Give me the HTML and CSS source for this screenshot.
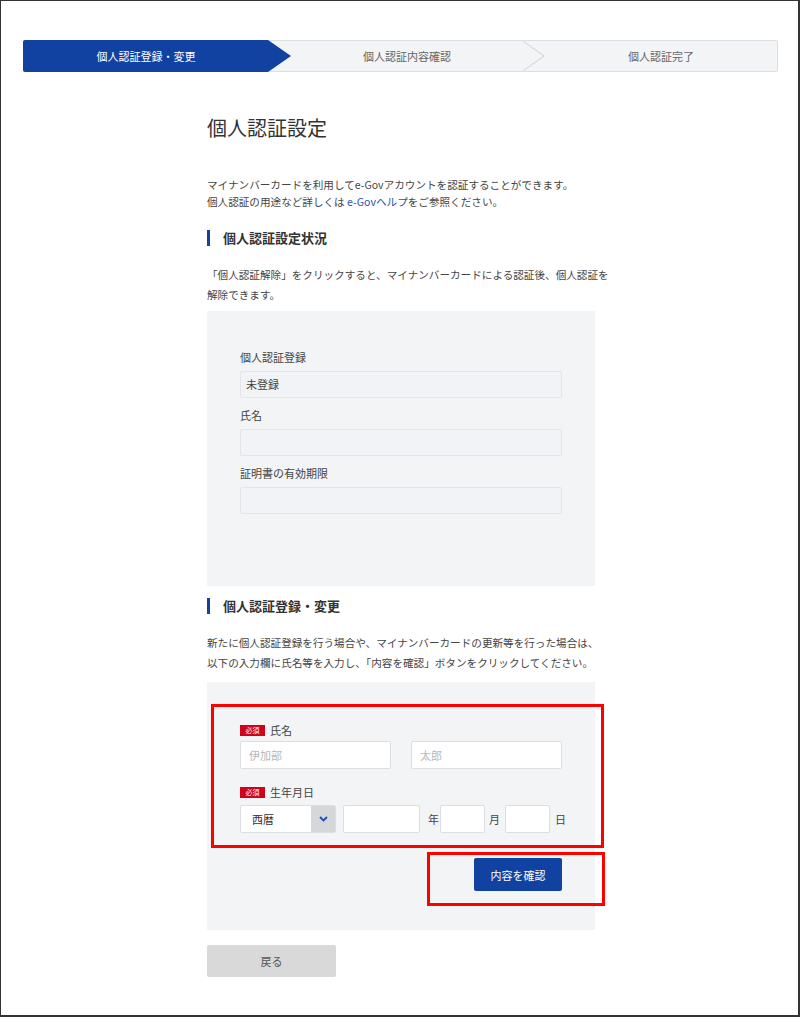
FILE: index.html
```html
<!DOCTYPE html>
<html lang="ja">
<head>
    <meta charset="UTF-8">
    <meta name="viewport" content="width=device-width, initial-scale=1.0">
    <title>個人認証設定</title>
    <link rel="stylesheet" href="styles.css">
</head>

<body>
    <div class="frame">
        <div class="stepper">
            <div class="step active">個人認証登録・変更</div>
            <div class="step">個人認証内容確認</div>
            <svg class="step-sep" width="22" height="30" viewBox="0 0 22 30">
                <polyline points="0,0 21,15 0,30" fill="none" stroke="#cfd1d6" stroke-width="1"/>
            </svg>
            <div class="step">個人認証完了</div>
        </div>

        <div class="main">
            <h1>個人認証設定</h1>
            <p class="lead">マイナンバーカードを利用してe-Govアカウントを認証することができます。<br>個人認証の用途など詳しくは <a href="#">e-Govヘルプ</a>をご参照ください。</p>

            <h2 class="section-title">個人認証設定状況</h2>
            <p class="text">「個人認証解除」をクリックすると、マイナンバーカードによる認証後、個人認証を解除できます。</p>

            <div class="panel status-panel">
                <div class="field-label">個人認証登録</div>
                <div class="field-value">未登録</div>
                <div class="field-label">氏名</div>
                <div class="field-value"></div>
                <div class="field-label">証明書の有効期限</div>
                <div class="field-value"></div>
            </div>

            <h2 class="section-title">個人認証登録・変更</h2>
            <p class="text">新たに個人認証登録を行う場合や、マイナンバーカードの更新等を行った場合は、以下の入力欄に氏名等を入力し、「内容を確認」ボタンをクリックしてください。</p>

            <div class="panel form-panel">
                <div class="input-label"><span class="required">必須</span>氏名</div>
                <div class="name-row">
                    <input type="text" class="text-input" placeholder="伊加部">
                    <input type="text" class="text-input" placeholder="太郎">
                </div>

                <div class="input-label second"><span class="required">必須</span>生年月日</div>
                <div class="date-row">
                    <div class="select">
                        <span class="select-text">西暦</span>
                        <span class="select-arrow">
                            <svg width="9" height="6" viewBox="0 0 9 6"><polyline points="1,1 4.5,4.5 8,1" fill="none" stroke="#1f4fa8" stroke-width="1.8"/></svg>
                        </span>
                    </div>
                    <input type="text" class="text-input year">
                    <span class="unit unit-year">年</span>
                    <input type="text" class="text-input small">
                    <span class="unit unit-month">月</span>
                    <input type="text" class="text-input small">
                    <span class="unit unit-day">日</span>
                </div>

                <div class="actions">
                    <button type="button" class="primary-button">内容を確認</button>
                </div>

                <div class="mark mark-inputs"></div>
                <div class="mark mark-button"></div>
            </div>

            <button type="button" class="back-button">戻る</button>
        </div>
    </div>
</body>
</html>
```

FILE: styles.css
```css
* {
    margin: 0;
    padding: 0;
    box-sizing: border-box;
}

body {
    font-family: 'Noto Sans CJK JP', 'Noto Sans', sans-serif;
    background-color: #ffffff;
    color: #333333;
}

.frame {
    width: 800px;
    height: 1017px;
    border: 1px solid #333333;
    border-right-width: 2px;
    border-bottom-width: 2px;
    padding-top: 39px;
    overflow: hidden;
}

/* stepper */
.stepper {
    display: flex;
    margin-left: 22px;
    width: 755px;
    height: 32px;
    background-color: #f3f4f6;
    border: 1px solid #dcdee2;
    border-radius: 2px;
}

.step {
    flex: 1;
    display: flex;
    align-items: center;
    justify-content: center;
    font-size: 11px;
    color: #666666;
}

.step.active {
    flex: 0 0 268px;
    margin: -1px 0 -1px -1px;
    padding-right: 22px;
    background-color: #1141a1;
    color: #ffffff;
    border-radius: 2px 0 0 2px;
    clip-path: polygon(0 0, calc(100% - 23px) 0, 100% 50%, calc(100% - 23px) 100%, 0 100%);
}

.step-sep {
    flex: 0 0 22px;
}

/* main column */
.main {
    width: 388px;
    margin-left: 206px;
}

h1 {
    margin-top: 42px;
    font-size: 20px;
    line-height: 28px;
    font-weight: 400;
    color: #333333;
}

.lead, .text {
    font-size: 10.6px;
    line-height: 17px;
    color: #444444;
    margin-right: -14px;
}

.lead {
    margin-top: 34px;
}

.lead a {
    color: #1f4fb0;
    text-decoration: none;
}

.section-title {
    margin-top: 20px;
    padding-left: 13px;
    border-left: 3px solid #1141a1;
    font-size: 13px;
    line-height: 16px;
    font-weight: 700;
    color: #333333;
}

.text {
    margin-top: 19px;
    line-height: 20px;
}

.panel {
    background-color: #f3f4f6;
    padding: 0 33px;
}

.status-panel {
    margin-top: 6px;
    padding-top: 38px;
    padding-bottom: 72px;
}

.field-label {
    font-size: 11px;
    line-height: 16px;
    color: #444444;
    margin-top: 9px;
}

.field-label:first-child {
    margin-top: 0;
}

.field-value {
    margin-top: 6px;
    height: 27px;
    padding-left: 5px;
    background-color: #f2f3f6;
    border: 1px solid #e3e5ea;
    border-radius: 2px;
    font-size: 11px;
    line-height: 25px;
    color: #444444;
}

.status-panel + .section-title {
    margin-top: 12px;
}

/* form panel */
.form-panel {
    position: relative;
    margin-top: 9px;
    padding-top: 40px;
    padding-bottom: 39px;
}

.input-label {
    display: flex;
    align-items: center;
    gap: 5px;
    font-size: 11px;
    line-height: 16px;
    color: #444444;
}

.input-label.second {
    margin-top: 15px;
}

.required {
    display: inline-block;
    width: 25px;
    height: 11px;
    background-color: #d0021b;
    color: #ffffff;
    font-size: 7px;
    line-height: 11px;
    text-align: center;
}

.name-row {
    display: flex;
    gap: 20px;
    margin-top: 3px;
}

.text-input {
    flex-shrink: 0;
    height: 28px;
    background-color: #ffffff;
    border: 1px solid #dcdee3;
    border-radius: 2px;
    padding-left: 8px;
    font-family: inherit;
    font-size: 11px;
    color: #333333;
}

.text-input::placeholder {
    color: #b5b7bb;
}

.name-row .text-input {
    width: 151px;
}

.date-row {
    display: flex;
    align-items: center;
    margin-top: 5px;
}

.select {
    display: flex;
    flex-shrink: 0;
    width: 96px;
    height: 28px;
    background-color: #ffffff;
    border: 1px solid #dcdee3;
    border-radius: 2px;
    overflow: hidden;
}

.select-text {
    flex: 1;
    padding-left: 11px;
    font-size: 11px;
    line-height: 26px;
    color: #333333;
}

.select-arrow {
    display: flex;
    align-items: center;
    justify-content: center;
    width: 24px;
    background-color: #d6d7d9;
}

.text-input.year {
    width: 77px;
    margin-left: 7px;
}

.text-input.small {
    width: 45px;
}

.unit {
    flex-shrink: 0;
    font-size: 11px;
    color: #444444;
}

.unit-year {
    margin: 0 1px 0 8px;
}

.unit-month {
    margin: 0 5px 0 4px;
}

.unit-day {
    margin-left: 5px;
}

.actions {
    display: flex;
    justify-content: flex-end;
    margin-top: 25px;
}

.primary-button {
    width: 88px;
    height: 33px;
    background-color: #1141a1;
    border: none;
    border-radius: 2px;
    font-family: inherit;
    font-size: 11px;
    color: #ffffff;
}

/* annotation boxes */
.mark {
    position: absolute;
    border: 3px solid #ff0000;
}

.mark-inputs {
    left: 4px;
    top: 22px;
    width: 393px;
    height: 144px;
}

.mark-button {
    left: 220px;
    top: 170px;
    width: 178px;
    height: 54px;
}

.back-button {
    display: block;
    margin-top: 15px;
    width: 129px;
    height: 32px;
    background-color: #d9d9d9;
    border: none;
    border-radius: 2px;
    font-family: inherit;
    font-size: 11px;
    color: #555555;
}
```
